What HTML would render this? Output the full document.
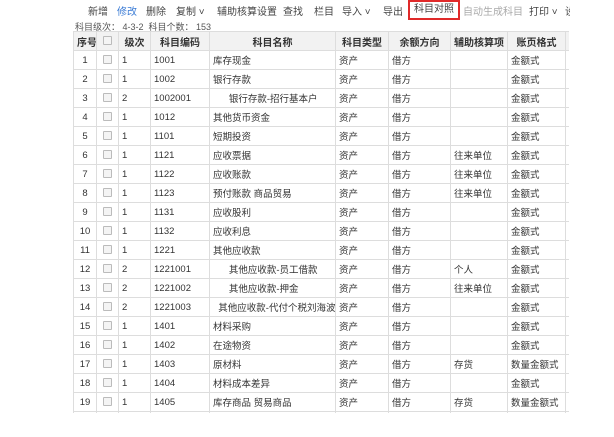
<!DOCTYPE html>
<html><head><meta charset="utf-8"><style>
body{margin:0;width:614px;height:437px;background:#fff;font-family:"Liberation Sans","Noto Sans CJK SC",sans-serif;font-size:10px;color:#333;position:relative;overflow:hidden}
.tb span{position:absolute;top:3px;font-size:10px;color:#444;white-space:nowrap}
.info{position:absolute;left:75px;top:20px;font-size:9px;color:#555}
.wrap{position:absolute;left:73px;top:31px;width:496px;height:382px;overflow:hidden}
table{border-collapse:collapse;table-layout:fixed;width:496px}
td,th{border:1px solid #ddd;height:18px;padding:0 3px;white-space:nowrap;overflow:hidden;font-weight:normal;font-size:9.5px}
th{background:#f2f2f2;font-weight:bold;color:#333;text-align:center;font-size:10px}
td.c{text-align:center}
.cb{display:inline-block;width:7px;height:7px;border:1px solid #bbb;background:#f4f4f4;border-radius:1px;vertical-align:middle}
</style></head><body>
<div class="tb">
<span style="left:88px">新增</span>
<span style="left:117px;color:#3a7bd5">修改</span>
<span style="left:146px">删除</span>
<span style="left:176px">复制 ˅</span>
<span style="left:217px">辅助核算设置</span>
<span style="left:283px">查找</span>
<span style="left:314px">栏目</span>
<span style="left:342px">导入 ˅</span>
<span style="left:383px">导出</span>
<span style="left:408px;top:0;height:15px;border:2px solid #e02a2a;padding:1px 4px 0;line-height:14px">科目对照</span>
<span style="left:463px;color:#aaa">自动生成科目</span>
<span style="left:529px">打印 ˅</span>
<span style="left:565px;width:5px;overflow:hidden">设</span>
</div>
<div class="info">科目级次： 4-3-2 &nbsp;科目个数： 153</div>
<div class="wrap"><table>
<colgroup><col style="width:23px"><col style="width:22px"><col style="width:32px"><col style="width:59px"><col style="width:126px"><col style="width:53px"><col style="width:62px"><col style="width:57px"><col style="width:58px"><col style="width:4px"></colgroup>
<tr><th>序号</th><th><span class="cb"></span></th><th>级次</th><th>科目编码</th><th>科目名称</th><th>科目类型</th><th>余额方向</th><th>辅助核算项</th><th>账页格式</th><th></th></tr>
<tr><td class="c">1</td><td class="c"><span class="cb"></span></td><td>1</td><td>1001</td><td>库存现金</td><td>资产</td><td>借方</td><td></td><td>金额式</td><td></td></tr>
<tr><td class="c">2</td><td class="c"><span class="cb"></span></td><td>1</td><td>1002</td><td>银行存款</td><td>资产</td><td>借方</td><td></td><td>金额式</td><td></td></tr>
<tr><td class="c">3</td><td class="c"><span class="cb"></span></td><td>2</td><td>1002001</td><td>&nbsp;&nbsp;&nbsp;&nbsp;&nbsp;&nbsp;银行存款-招行基本户</td><td>资产</td><td>借方</td><td></td><td>金额式</td><td></td></tr>
<tr><td class="c">4</td><td class="c"><span class="cb"></span></td><td>1</td><td>1012</td><td>其他货币资金</td><td>资产</td><td>借方</td><td></td><td>金额式</td><td></td></tr>
<tr><td class="c">5</td><td class="c"><span class="cb"></span></td><td>1</td><td>1101</td><td>短期投资</td><td>资产</td><td>借方</td><td></td><td>金额式</td><td></td></tr>
<tr><td class="c">6</td><td class="c"><span class="cb"></span></td><td>1</td><td>1121</td><td>应收票据</td><td>资产</td><td>借方</td><td>往来单位</td><td>金额式</td><td></td></tr>
<tr><td class="c">7</td><td class="c"><span class="cb"></span></td><td>1</td><td>1122</td><td>应收账款</td><td>资产</td><td>借方</td><td>往来单位</td><td>金额式</td><td></td></tr>
<tr><td class="c">8</td><td class="c"><span class="cb"></span></td><td>1</td><td>1123</td><td>预付账款 商品贸易</td><td>资产</td><td>借方</td><td>往来单位</td><td>金额式</td><td></td></tr>
<tr><td class="c">9</td><td class="c"><span class="cb"></span></td><td>1</td><td>1131</td><td>应收股利</td><td>资产</td><td>借方</td><td></td><td>金额式</td><td></td></tr>
<tr><td class="c">10</td><td class="c"><span class="cb"></span></td><td>1</td><td>1132</td><td>应收利息</td><td>资产</td><td>借方</td><td></td><td>金额式</td><td></td></tr>
<tr><td class="c">11</td><td class="c"><span class="cb"></span></td><td>1</td><td>1221</td><td>其他应收款</td><td>资产</td><td>借方</td><td></td><td>金额式</td><td></td></tr>
<tr><td class="c">12</td><td class="c"><span class="cb"></span></td><td>2</td><td>1221001</td><td>&nbsp;&nbsp;&nbsp;&nbsp;&nbsp;&nbsp;其他应收款-员工借款</td><td>资产</td><td>借方</td><td>个人</td><td>金额式</td><td></td></tr>
<tr><td class="c">13</td><td class="c"><span class="cb"></span></td><td>2</td><td>1221002</td><td>&nbsp;&nbsp;&nbsp;&nbsp;&nbsp;&nbsp;其他应收款-押金</td><td>资产</td><td>借方</td><td>往来单位</td><td>金额式</td><td></td></tr>
<tr><td class="c">14</td><td class="c"><span class="cb"></span></td><td>2</td><td>1221003</td><td>&nbsp;&nbsp;其他应收款-代付个税刘海波</td><td>资产</td><td>借方</td><td></td><td>金额式</td><td></td></tr>
<tr><td class="c">15</td><td class="c"><span class="cb"></span></td><td>1</td><td>1401</td><td>材料采购</td><td>资产</td><td>借方</td><td></td><td>金额式</td><td></td></tr>
<tr><td class="c">16</td><td class="c"><span class="cb"></span></td><td>1</td><td>1402</td><td>在途物资</td><td>资产</td><td>借方</td><td></td><td>金额式</td><td></td></tr>
<tr><td class="c">17</td><td class="c"><span class="cb"></span></td><td>1</td><td>1403</td><td>原材料</td><td>资产</td><td>借方</td><td>存货</td><td>数量金额式</td><td></td></tr>
<tr><td class="c">18</td><td class="c"><span class="cb"></span></td><td>1</td><td>1404</td><td>材料成本差异</td><td>资产</td><td>借方</td><td></td><td>金额式</td><td></td></tr>
<tr><td class="c">19</td><td class="c"><span class="cb"></span></td><td>1</td><td>1405</td><td>库存商品 贸易商品</td><td>资产</td><td>借方</td><td>存货</td><td>数量金额式</td><td></td></tr>
<tr><td></td><td></td><td></td><td></td><td></td><td></td><td></td><td></td><td></td><td></td></tr>
</table></div>
</body></html>
